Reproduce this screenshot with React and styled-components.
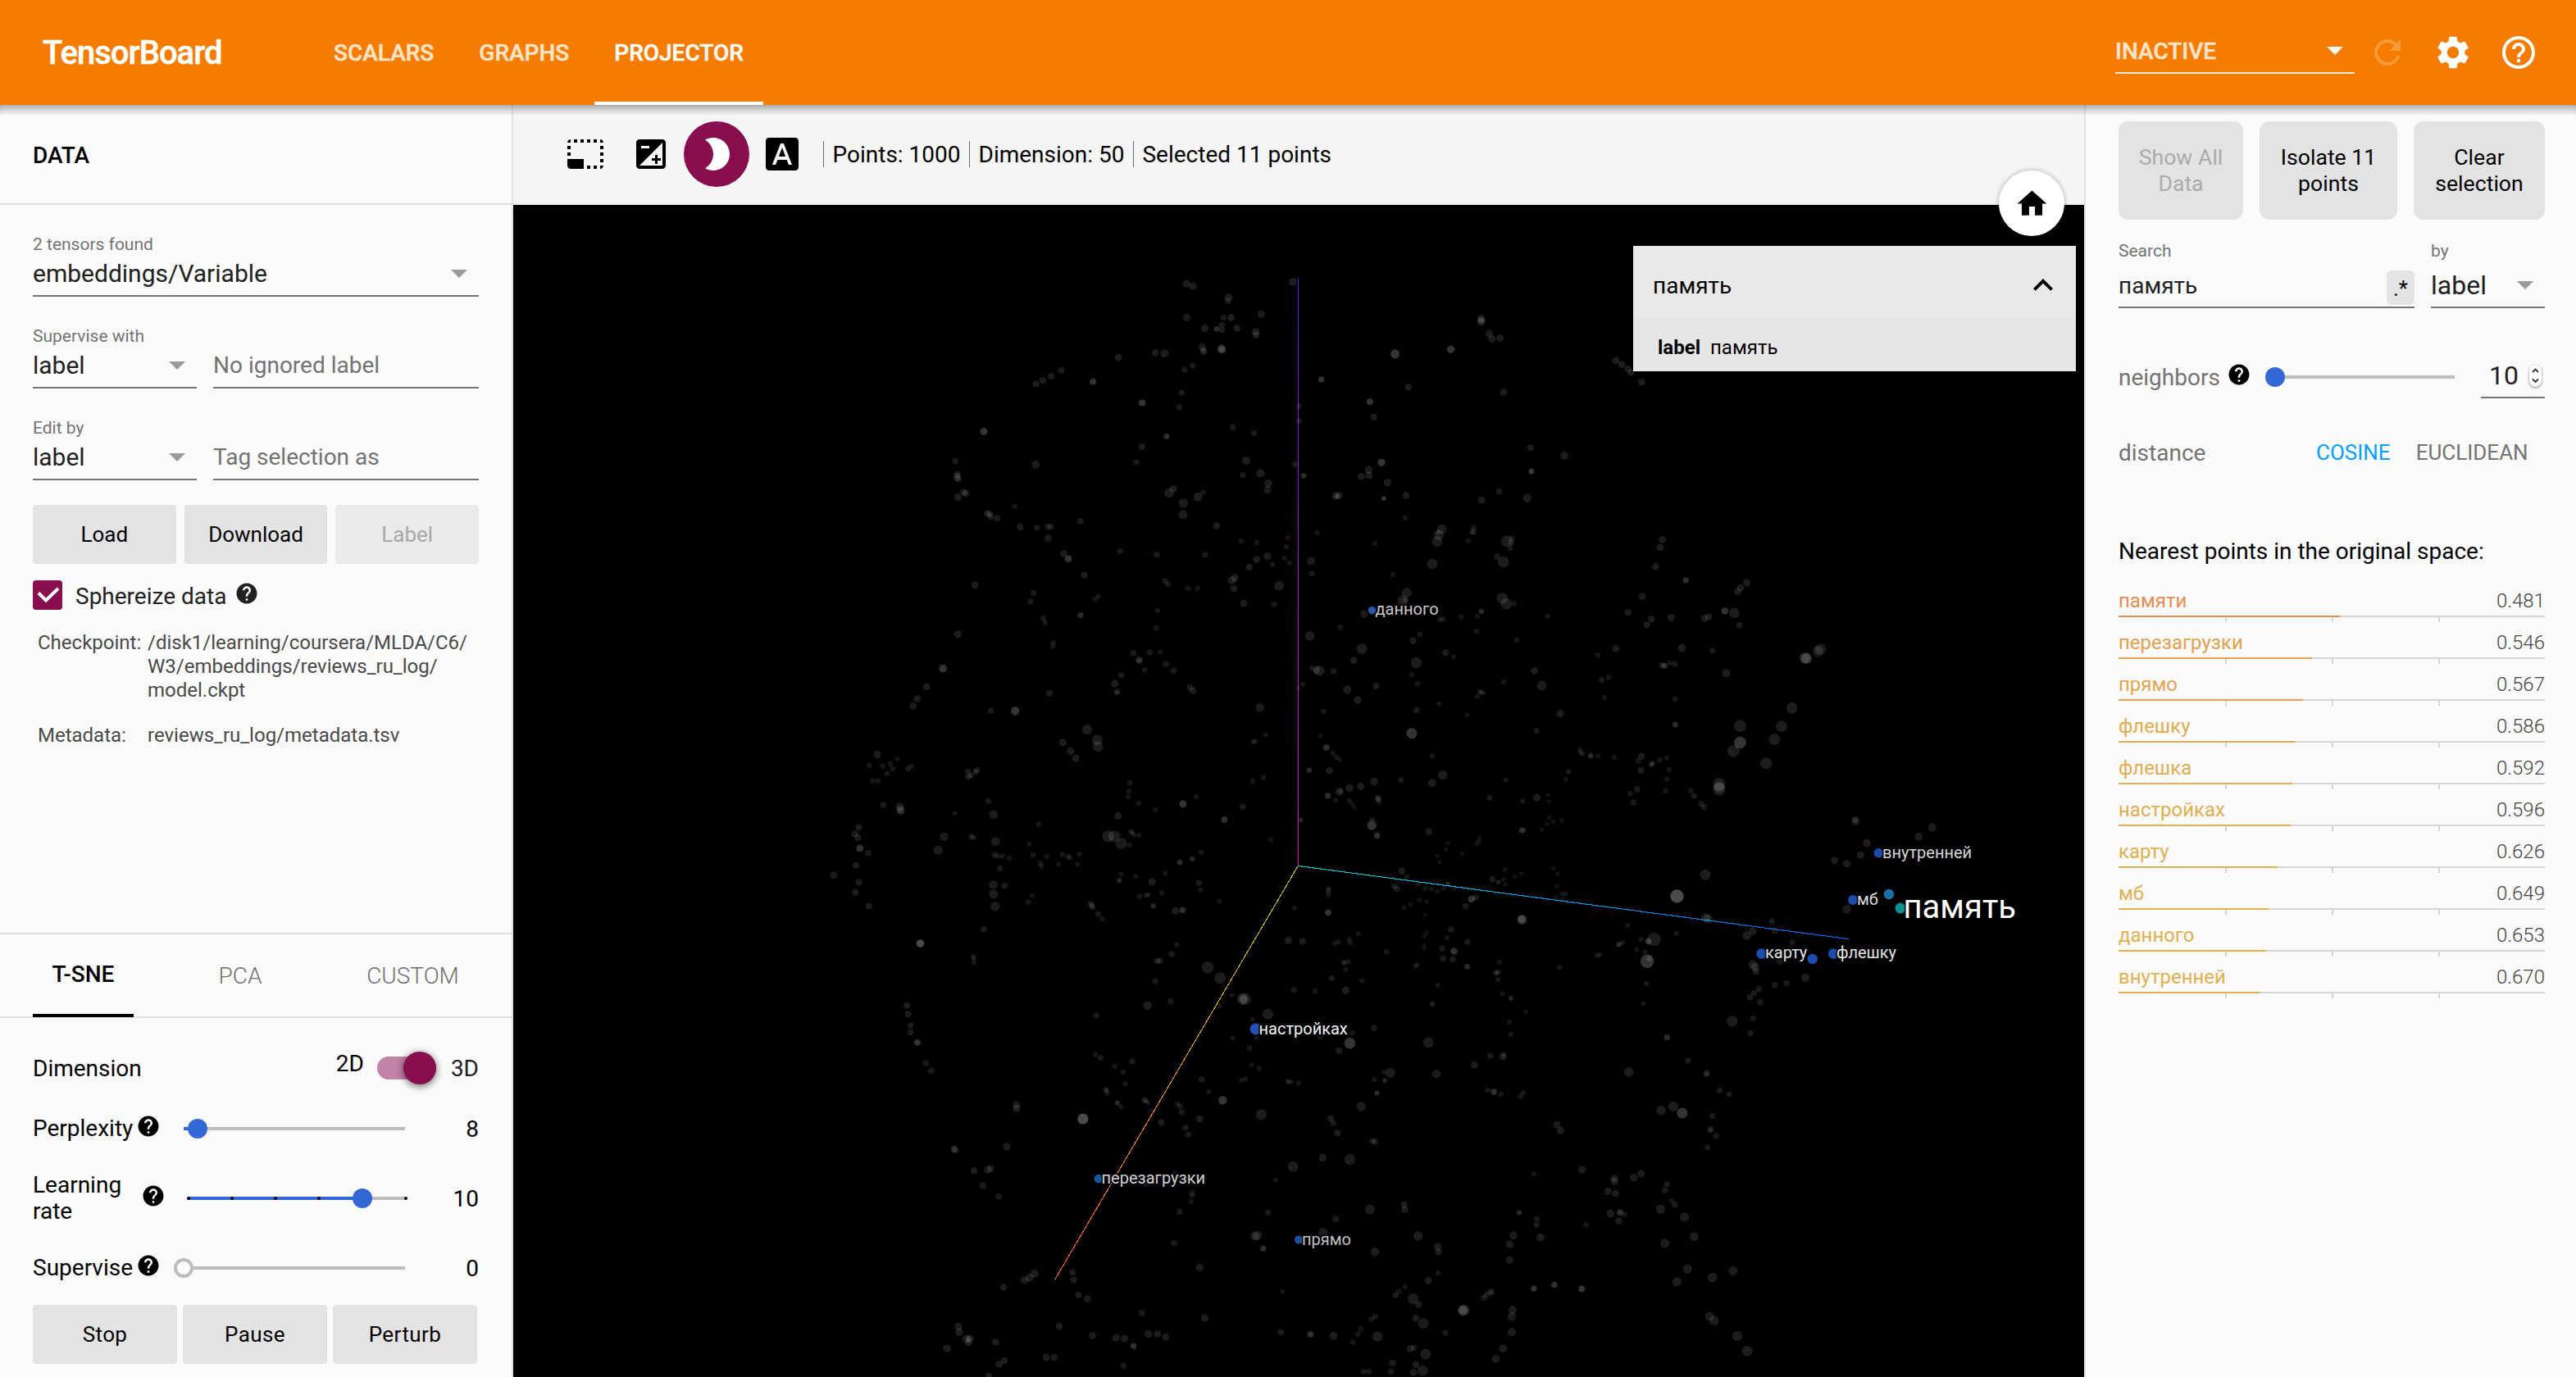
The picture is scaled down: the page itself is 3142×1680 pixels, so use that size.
import React from "react";
import styled, { createGlobalStyle, css } from "styled-components";
import {
  MdPhotoSizeSelectSmall,
  MdExposure,
  MdBrightness2,
  MdFontDownload,
  MdHome,
  MdSettings,
  MdHelp,
  MdHelpOutline,
  MdRefresh,
  MdExpandLess,
} from "react-icons/md";

const color = {
  orange: "#f57c00",
  accent: "#880e4f",
  blue: "#3367d6",
  panel: "#fafafa",
  line: "#e0e0e0",
  button: "#e3e3e3",
  text: "#212121",
  muted: "#737373",
};

const GlobalStyle = createGlobalStyle`
  * { box-sizing: border-box; }
  body {
    margin: 0;
    font-family: Roboto, "Noto Sans", sans-serif;
    font-size: 28px;
    color: #000;
    background: ${color.panel};
  }
  svg { display: block; flex: none; }
`;

const App = styled.div`
  display: flex;
  flex-direction: column;
  width: 3142px;
  height: 1680px;
  overflow: hidden;
`;

/* ---------- header ---------- */

const Header = styled.header`
  flex: none;
  display: flex;
  align-items: center;
  height: 128px;
  padding: 0 46px 0 52px;
  background: ${color.orange};
  color: #fff;
  -webkit-text-stroke: 0.5px currentColor;
  svg { -webkit-text-stroke: 0; }
`;

const Brand = styled.div`
  width: 331px;
  font-size: 40px;
  font-weight: 500;
  letter-spacing: -1px;
`;

const Nav = styled.nav`
  display: flex;
  gap: 7px;
`;

const NavTab = styled.div`
  display: flex;
  align-items: center;
  height: 128px;
  padding: 0 24px;
  border-top: 4px solid transparent;
  border-bottom: 4px solid ${(p) => (p.$active ? "#fff" : "transparent")};
  font-weight: 500;
  color: ${(p) => (p.$active ? "#fff" : "#fde3c8")};
`;

const Status = styled.div`
  display: flex;
  align-items: center;
  justify-content: space-between;
  width: 292px;
  height: 52px;
  margin: 0 16px 0 auto;
  padding: 0 14px 2px 0;
  border-bottom: 2px solid #fdebd8;
  font-weight: 500;
  color: #fde3c8;
`;

const HeaderIcon = styled.div`
  margin-right: ${(p) => (p.$last ? 0 : "32px")};
  opacity: ${(p) => (p.$dim ? 0.22 : 1)};
`;

const Caret = styled.span`
  border: 10px solid transparent;
  border-top-color: ${(p) => p.$color || "#9a9a9a"};
  border-bottom: 0;
`;

/* ---------- body ---------- */

const Body = styled.div`
  position: relative;
  flex: 1;
  display: flex;
  min-height: 0;
`;

const TopShade = styled.div`
  position: absolute;
  inset: 0 0 auto 0;
  height: 12px;
  box-shadow: inset 0 10px 12px -6px rgba(0, 0, 0, 0.4);
`;

const LeftPanel = styled.aside`
  flex: none;
  display: flex;
  flex-direction: column;
  width: 626px;
  background: ${color.panel};
  border-right: 2px solid ${color.line};
`;

const PanelTitle = styled.div`
  height: 122px;
  padding: 2px 40px 0;
  border-bottom: 2px solid ${color.line};
  line-height: 120px;
  font-weight: 500;
`;

const DataSection = styled.section`
  flex: 1;
  padding: 34px 40px 0;
`;

const FieldRow = styled.div`
  display: flex;
  align-items: flex-end;
  gap: 20px;
  margin-bottom: ${(p) => (p.$last ? 30 : 34)}px;
`;

const Field = styled.label`
  display: flex;
  flex-direction: column;
  flex: ${(p) => (p.$width ? `0 0 ${p.$width}px` : "1")};
`;

const FieldLabel = styled.span`
  height: 28px;
  line-height: 28px;
  font-size: 21px;
  color: ${color.muted};
`;

const FieldValue = styled.span`
  display: flex;
  align-items: center;
  justify-content: space-between;
  height: 50px;
  padding: 0 ${(p) => p.$pad ?? 14}px 5px 0;
  border-bottom: 2px solid ${color.muted};
  font-size: 30px;
  color: ${color.text};
  ${(p) =>
    p.$placeholder &&
    css`
      font-size: 28px;
      color: ${color.muted};
    `}
`;

const ButtonRow = styled.div`
  display: flex;
  gap: ${(p) => p.$gap}px;
`;

const Button = styled.button`
  flex: 1;
  height: 72px;
  padding: 0;
  border: 0;
  border-radius: 4px;
  background: ${color.button};
  font: 26px Roboto, sans-serif;
  letter-spacing: ${(p) => p.$spacing || 0}px;
  color: #000;
  &:disabled {
    background: #eaeaea;
    color: #a8a8a8;
  }
`;

const CheckRow = styled.div`
  display: flex;
  align-items: center;
  height: 36px;
  margin: 20px 0 26px;
  color: ${color.text};
`;

const Checkbox = styled.span`
  width: 36px;
  height: 36px;
  margin-right: 16px;
  border-radius: 4px;
  background: ${color.accent};
`;

const CheckLabel = styled.span`
  margin-right: 10px;
  padding-top: 2px;
`;

const Meta = styled.dl`
  display: grid;
  grid-template-columns: 134px 420px;
  row-gap: 26px;
  margin: 0 0 0 6px;
  font-size: 24px;
  line-height: 29px;
  color: #4a4a4a;
  dd { margin: 0; }
`;

const Projection = styled.section`
  flex: none;
  border-top: 2px solid ${color.line};
`;

const Tabs = styled.div`
  display: flex;
  height: 102px;
  padding-left: 40px;
  border-bottom: 2px solid ${color.line};
`;

const Tab = styled.div`
  width: ${(p) => p.$width}px;
  height: 101px;
  padding-top: ${(p) => (p.$active ? 0 : 2)}px;
  line-height: 97px;
  text-align: center;
  font-weight: ${(p) => (p.$active ? 500 : 300)};
  color: ${(p) => (p.$active ? "#000" : "#707070")};
  border-bottom: 4px solid ${(p) => (p.$active ? "#000" : "transparent")};
`;

const Controls = styled.div`
  padding: 41px 42px 16px 40px;
`;

const Control = styled.div`
  display: flex;
  align-items: center;
  height: ${(p) => p.$height}px;
  margin-bottom: ${(p) => p.$after}px;
`;

const ControlLabel = styled.span`
  width: ${(p) => p.$width}px;
  margin-right: 4px;
  line-height: 32px;
`;

const Help = styled.span`
  margin-right: ${(p) => p.$after || 0}px;
  padding-bottom: ${(p) => p.$lift ?? 6}px;
`;

const ControlValue = styled.span`
  flex: 1;
  margin-right: -2px;
  text-align: right;
`;

const TwoD = styled.span`
  margin: -12px 16px 0 auto;
`;

const Toggle = styled.span`
  display: flex;
  justify-content: flex-end;
  align-items: center;
  width: 72px;
  height: 28px;
  margin-right: 18px;
  border-radius: 14px;
  background: #c283a6;
`;

const ToggleKnob = styled.span`
  width: 40px;
  height: 40px;
  border-radius: 50%;
  background: ${color.accent};
  box-shadow: 0 2px 10px rgba(0, 0, 0, 0.6);
`;

const ThreeD = styled.span`
  margin-right: -2px;
  color: ${color.text};
`;

/* ---------- slider ---------- */

const Track = styled.span`
  position: relative;
  flex: none;
  width: ${(p) => p.$width}px;
  height: 4px;
  background: #bdbdbd;
`;

const Fill = styled.span`
  display: block;
  height: 4px;
  background: ${color.blue};
`;

const Knob = styled.span`
  position: absolute;
  top: -10px;
  width: 24px;
  height: 24px;
  margin-left: -12px;
  border-radius: 50%;
  background: ${(p) => (p.$empty ? color.panel : color.blue)};
  border: ${(p) => (p.$empty ? "4px solid #bdbdbd" : "0")};
`;

const Mark = styled.span`
  position: absolute;
  top: 0;
  width: 4px;
  height: 4px;
  margin-left: -2px;
  border-radius: 50%;
  background: #000;
`;

function Slider({ width, value, marks = 0, empty }) {
  const steps = Array.from({ length: marks }, (_, i) => (i * 100) / (marks - 1));
  return (
    <Track $width={width}>
      <Fill style={{ width: `${value}%` }} />
      {steps.map((s) => (
        <Mark key={s} style={{ left: `${s}%` }} />
      ))}
      <Knob $empty={empty} style={{ left: `${value}%` }} />
    </Track>
  );
}

/* ---------- centre ---------- */

const Center = styled.main`
  position: relative;
  flex: none;
  width: 1916px;
`;

const Toolbar = styled.div`
  display: flex;
  align-items: center;
  height: 122px;
  padding-left: 48px;
  background: #f5f5f5;
  border-bottom: 2px solid #eee;
`;

const ToolButton = styled.span`
  display: flex;
  align-items: center;
  justify-content: center;
  width: 80px;
  height: 80px;
  border-radius: 50%;
  background: ${(p) => (p.$on ? color.accent : "transparent")};
  color: ${(p) => (p.$on ? "#fff" : "#000")};
`;

const Stats = styled.div`
  display: flex;
  margin-left: 10px;
`;

const Stat = styled.span`
  height: 32px;
  padding: 0 10.5px 0 10.5px;
  border-left: 1.5px solid #6a6a6a;
  line-height: 33px;
  white-space: nowrap;
`;

const HomeButton = styled.div`
  position: absolute;
  top: 80px;
  right: 24px;
  display: flex;
  align-items: center;
  justify-content: center;
  width: 80px;
  height: 80px;
  border-radius: 50%;
  background: #fff;
  box-shadow: 0 0 6px rgba(0, 0, 0, 0.3);
`;

const Card = styled.div`
  position: absolute;
  top: 172px;
  right: 10px;
  width: 540px;
`;

const CardHead = styled.div`
  display: flex;
  align-items: center;
  justify-content: space-between;
  height: 88px;
  padding: 8px 16px 0 24px;
  background: #e9e9e9;
`;

const CardRow = styled.div`
  display: flex;
  gap: 12px;
  height: 65px;
  padding: 4px 30px 0;
  background: #e6e6e6;
  line-height: 65px;
  font-size: 24px;
`;

/* Point cloud: every sector holds "x y diameter" triples on its own grid. */
const SECTORS = [
  {
    x: 1000, y: 300, sx: 1.96, sy: 2.24,
    points: `877 104 18,892 110 18,1131 98 19,977 141 19,976 151 14,877 196 18,965 196 14,983 196 18,1055 187 18,961 216 14,962 230 14,949 227 14,949 227 12,920 225 18,997 225 17,1042 235 18,1043 244 16,914 276 17,918 288 17,917 286 13,960 282 22,961 282 18,961 283 15,802 292 17,824 294 19,714 305 17,577 340 16,553 356 16,533 368 16,517 377 16,653 371 16,653 371 14,891 327 14,872 338 14,865 401 14,859 441 14,770 428 16,771 430 16,392 507 18,392 507 17,987 496 15,1038 512 14,1145 438 14,1145 479 14,829 520 15,829 521 13,770 549 16,756 591 14,324 588 15,516 598 19,329 625 16,328 632 18,331 638 15,344 673 16,349 677 17,330 687 18,835 675 23,845 664 18,869 703 22,868 734 22,904 686 22,916 673 13,948 765 17,1019 587 20,1011 626 14,1053 622 20,1072 649 19,1070 667 18,1136 597 15,1156 628 14,1157 629 12,1233 683 18,1241 682 17,1237 685 13,1199 365 15,1198 365 14,1315 426 16,1315 426 15,1324 468 16,1375 295 22,1375 296 21,1509 283 18,1407 386 16,1343 592 19,1342 592 17,1312 612 18,1313 627 18,1294 630 17,1357 647 18,1401 682 17,1348 690 12,1348 690 11,1348 690 10,1399 743 13,1487 774 23,1480 790 24,1476 808 25,1477 783 12,466 712 13,400 731 16,406 733 16,409 741 15,424 744 15,479 768 17,519 770 14,545 768 14,552 767 14,546 799 17,623 752 15,583 841 17,594 855 18,594 855 15,632 900 17,718 834 14,805 844 15,921 844 15,1007 807 13,1045 811 13,1119 797 12,1115 822 13,1111 853 12,1123 867 12,1082 871 12,1070 848 18,1044 857 18,1026 878 16,1189 784 13,1174 861 19,1176 895 14,1327 813 12,1370 899 13,1464 869 25,371 927 18,511 948 14,503 972 14,666 957 12,658 965 13,825 915 14,832 924 14,880 936 13,903 936 13,992 907 18,985 914 19,990 937 16,1098 929 23,1013 977 17,1086 979 14,1403 948 24,1393 969 24,1400 968 14,1301 1006 18,534 1018 14,539 1030 13,622 1010 14,625 1008 12,807 996 13,804 1044 13,558 1084 13,557 1094 13,330 1061 18,1171 1066 23,1244 1043 13,1296 1101 25,1434 1062 13,1418 1079 16,1426 1139 26,1276 1133 16,1482 1021 13,1489 1020 13,1496 1112 16,1515 1123 12,750 1113 15,789 1111 14,814 1110 13,763 1131 17,764 1134 14,776 1159 13,827 1143 15,846 1161 15,721 1174 15,705 1196 18,711 1218 14,709 1222 12,885 1207 15,892 1216 16,294 1154 20,295 1156 17,255 1205 17,233 1238 17,223 1257 17,549 1223 16,409 1270 15,467 1270 20,467 1272 21,1052 1262 20,1194 1161 25,1187 1159 18,1176 1154 12,1228 1162 14,1261 1212 20,1286 1241 18,1330 1203 16,1154 1198 12,1143 1209 12,1204 1272 13,1415 1172 12,1429 1197 13,1426 1269 15,1480 1251 12,1415 1332 26,1415 1332 25,639 1322 24,663 1350 25,665 1368 25,581 1357 18,599 1381 18,612 1400 18,1066 1336 12,1041 1354 12,1036 1355 12,1196 1339 11,1211 1371 16,1211 1371 13,1226 1386 12,1235 1397 12,1242 1404 12,1170 1433 14,1170 1433 11,1218 1434 17,1464 1394 13,1489 1446 22,1464 1468 20,1389 1460 14,137 1390 18,118 1420 13,150 1422 13,169 1415 13,185 1402 12,174 1430 13,161 1442 13,211 1428 14,220 1422 12,125 1462 13,138 1462 13,376 1432 14,372 1438 14,354 1437 14,361 1447 14,355 1451 15,741 1467 13,739 1490 13,737 1506 12,762 1524 13,802 1541 12,868 1525 19,868 1525 15,900 1506 12,1060 1453 13,1034 1462 13,1011 1533 15,1325 1464 19,1293 1477 18,1266 1482 19,1242 1492 19,1245 1490 12,1214 1502 15,1215 1504 13,1233 1515 12,1266 1516 12,1273 1526 11,1278 1536 11,1334 1508 14,1335 1512 14,1336 1519 13,152 1528 15,191 1533 20,193 1541 19,193 1546 17,323 1551 12,403 1517 14,415 1554 21,713 1558 18,967 1566 14,1150 1568 11,1321 1568 12`,
  },
  {
    x: 1000, y: 1000, sx: 1.96, sy: 2.306,
    points: `523 13 13,93 22 16,84 40 16,91 51 16,95 80 18,96 81 15,116 94 15,86 129 16,33 156 17,93 176 16,85 205 17,117 243 16,297 48 20,283 86 22,362 48 14,368 51 12,420 61 21,501 69 12,418 99 14,426 103 13,437 103 13,453 108 13,430 137 14,510 99 13,527 122 13,530 131 12,542 104 13,571 126 12,580 98 13,593 104 12,598 107 12,621 97 12,616 125 12,415 183 21,415 209 21,419 244 22,442 186 15,507 214 12,498 232 12,392 308 15,240 348 21,240 349 18,240 348 17,367 385 13,368 391 12,368 402 12,689 47 28,704 47 28,721 67 27,743 34 12,747 37 12,751 43 12,763 44 12,740 72 12,911 92 13,861 119 14,860 121 12,892 110 12,889 111 12,826 151 12,720 154 12,717 170 12,715 172 12,755 160 12,794 175 18,764 216 13,785 211 12,780 213 12,817 206 12,797 241 12,797 244 12,906 178 14,910 198 12,955 230 12,647 237 14,651 242 14,652 247 13,665 266 14,675 279 13,850 257 18,867 254 15,867 255 14,1078 57 12,1134 249 12,1098 230 12,1217 194 13,1216 200 13,1216 210 13,1215 261 16,1215 262 14,1120 340 17,1154 343 16,1230 348 12,1240 344 12,1265 337 12,1268 347 12,1287 321 12,1355 372 13,1253 402 12,1253 403 11,1263 400 12,1257 422 12,853 352 13,841 379 15,806 398 15,813 397 15,802 455 15,783 523 21,838 511 14,661 551 14,927 416 28,957 446 27,985 494 12,956 524 12,1010 505 27,1016 505 28,1013 505 18,1071 547 26,1034 562 12,1133 479 14,1184 482 13,1224 446 14,1257 480 18,1296 453 13,1267 629 28,1267 629 25,1241 650 16,1274 600 12,1325 586 15,1195 613 12,1090 583 12,987 614 12,1027 643 13,1044 614 12,1032 690 12,1050 700 12,1018 730 12,1008 733 12,913 731 15,930 765 12,1118 737 12,1121 737 11,1128 738 11,1144 741 12,963 789 21,963 790 20,208 523 16,211 547 16,217 579 14,217 598 15,233 626 17,233 628 14,253 685 15,266 707 15,659 660 13,671 670 14,705 694 13,747 680 14,725 710 13,730 743 13,684 759 13,685 762 12,687 771 12,711 797 12,711 798 12,720 808 12,776 789 14,779 791 12,784 796 12,816 852 16,855 799 12,861 806 14,865 823 15,874 867 15,881 886 15,908 842 17,629 842 27,629 842 26,629 842 24,470 802 18,470 813 18,447 920 18,321 926 16,323 930 16,409 981 16,402 985 18,368 988 16,390 1030 16,427 1060 15,1055 830 26,1364 712 23,1349 711 12,1351 733 12,1350 735 11,1326 732 12,1332 769 12,1332 770 12,1294 807 22,1221 840 16,1227 854 15,1237 882 17,1202 951 18,1267 956 26,1321 904 14,1327 906 15,1131 976 25,1474 716 20,1455 627 25,1090 1014 12,1071 1105 14,849 995 13,777 1026 13,890 1049 13,890 1058 13,888 1075 12,860 1103 15,847 1192 15,1040 1172 21,1046 1170 22,1060 1206 15,1060 1207 13,1203 1162 22,1233 1123 16,1315 1096 23,1397 1083 16,1398 1097 16,1430 1171 22,1327 1216 21,1477 1202 18,1479 1216 16,1478 1276 13,1455 1297 17,1399 1314 12,1384 1328 13,1376 1338 14,1106 1327 12,908 1260 18,920 1402 18,770 1388 15,513 1277 20,501 1289 20,489 1296 18,439 1315 17,604 1274 16,607 1295 16,618 1337 16,640 1348 17,572 1425 17,331 1426 18,333 1442 18,351 1461 20,359 1461 19,355 1472 17,355 1461 13,304 1488 19,420 1470 17,541 1513 18,560 1513 17,441 1522 17,429 1532 17,404 1566 17,652 1452 17,708 1458 18,728 1460 18,750 1480 14,750 1482 14,785 1447 18,807 1447 17,827 1456 17,726 1536 15,1102 1442 15,1173 1448 17,1173 1448 13,1228 1452 19,1274 1470 13,1286 1448 13,1293 1433 13,1318 1406 13,1327 1398 14,1333 1454 24,1418 1348 26,1431 1364 16,1425 1403 16,1443 1417 25,1495 1444 14,1411 1488 17,1420 1486 14,1448 1504 25,1369 1529 16,1425 1533 17,1441 1550 25,1419 1555 17,1300 1553 14,1313 1553 14,1365 1553 15,1320 14 24,1319 18 21,1332 43 15,1332 47 14,1456 34 17,1502 66 10,1498 84 10,1476 102 10,1482 119 10,1391 145 17,1403 161 12,1373 188 14,1380 195 15,1430 181 12,1447 194 12,1462 195 12,1476 202 11,1500 180 12,1502 182 11,1490 194 11,1517 192 11,1433 226 11,1412 238 11,1397 247 11,1451 231 10,1447 268 10,1451 317 10,1446 328 10,1445 353 10,1444 364 10,1509 309 15,1499 332 12,1488 363 15,1516 370 18,1516 370 14,1490 391 15,1513 393 15,1428 408 12,1423 413 11,1477 466 12,1464 517 12,1465 521 11,967 2 16,1150 2 11`,
  },
  {
    x: 1750, y: 300, sx: 1.96, sy: 2.24,
    points: `111 198 19,111 208 19,111 204 17,130 240 18,137 254 18,156 252 18,38 283 18,433 313 17,447 324 17,462 336 17,469 346 16,495 372 17,165 400 17,229 551 16,310 573 19,231 616 14,231 616 13,231 616 11,154 671 15,112 695 17,221 689 20,93 770 13,93 781 14,89 783 13,80 806 12,172 807 27,184 799 14,183 811 15,180 826 13,149 849 15,164 864 27,161 963 27,171 978 27,189 978 13,112 998 13,111 1000 12,102 1012 12,63 1014 12,100 1053 13,270 1012 13,196 1078 13,544 803 18,539 824 17,528 876 17,600 914 15,600 914 13,746 921 17,731 934 17,724 945 17,496 958 17,462 1002 16,518 1020 16,507 1035 16,565 1016 17,645 1018 16,655 1014 16,694 998 16,693 998 16,716 1003 25,728 1036 15,390 1119 13,433 1100 17,591 1099 19,664 1106 14,543 1146 14,549 1148 15,551 1147 13,562 1140 13,574 1143 14,697 1168 20,399 1186 14,416 1179 13,406 1234 13,238 1161 17,256 1202 23,165 1192 12,108 1217 12,110 1221 12,116 1222 12,102 1231 12,77 1281 11,300 1278 18,243 1325 14,575 1239 13,575 1308 14,575 1309 12,884 1126 26,888 1127 27,889 1128 24,922 1102 26,916 1108 25,854 1263 27,829 1313 27,812 1349 27,792 1414 28,730 1312 29,730 1357 29,730 1358 28,714 1381 29,680 1471 30,680 1485 30,680 1479 26,347 1376 12,348 1385 12,354 1388 12,373 1393 14,373 1394 11,390 1394 12,429 1398 13,494 1395 17,486 1407 13,520 1414 13,520 1415 12,517 1420 11,538 1405 13,555 1399 12,493 1433 16,560 1431 13,555 1457 13,552 1490 13,484 1485 15,467 1497 13,475 1521 15,612 1489 13,620 1503 14,637 1525 14,644 1534 14,320 1436 11,320 1437 10,313 1458 11,170 1460 12,131 1508 14,244 1508 18,210 1517 12,271 1500 10,273 1518 10,274 1562 11,1005 1567 16`,
  },
  {
    x: 1750, y: 1000, sx: 1.96, sy: 2.306,
    points: `1006 6 18,1189 22 20,1157 48 19,1033 66 19,1018 100 18,956 115 17,985 124 18,985 252 21,268 12 11,283 6 11,304 2 11,256 29 10,207 31 13,209 30 14,215 29 10,107 51 10,106 62 11,100 68 11,66 95 10,167 141 11,207 151 10,191 160 10,138 168 15,153 174 11,151 177 10,164 168 11,169 182 10,283 137 11,293 152 10,292 188 11,312 209 13,303 209 11,290 218 11,306 225 11,314 232 10,98 219 15,88 223 17,87 224 15,74 243 15,209 281 24,208 281 21,208 280 16,78 344 14,77 413 14,79 414 12,155 401 12,153 429 12,147 430 13,147 431 12,151 450 12,162 490 12,182 501 12,182 505 11,298 416 12,218 541 11,178 570 12,182 604 12,165 661 13,163 667 17,133 664 14,95 690 18,127 761 13,141 766 15,142 766 14,158 773 13,211 769 13,205 779 13,579 215 32,579 215 31,579 216 33,647 155 25,648 276 22,654 279 21,578 320 13,524 337 32,510 342 15,511 343 15,493 337 12,508 398 33,508 399 32,513 391 14,483 366 12,502 373 12,461 297 12,449 346 12,441 351 13,439 352 12,395 380 12,388 383 12,506 461 13,499 517 12,806 286 15,813 313 15,760 314 19,746 326 21,855 345 14,760 408 20,766 415 20,768 427 16,825 399 15,886 445 20,841 460 15,813 465 14,775 477 15,763 488 14,754 500 15,778 514 15,761 559 14,755 601 14,711 567 26,555 613 15,556 613 13,605 678 14,464 710 23,650 713 15,650 717 13,681 762 14,704 773 14,664 834 14,660 870 14,658 875 13,673 890 14,652 922 14,541 818 23,570 807 24,591 825 26,592 826 25,292 858 18,301 875 18,352 985 18,237 997 12,429 1009 17,430 1018 18,414 1046 18,432 1052 17,476 1007 18,493 996 18,555 1026 14,550 1043 15,567 1073 13,574 1083 14,540 1096 22,597 1118 22,620 1173 21,550 1192 22,420 1108 19,443 1105 15,443 1106 14,454 1111 13,440 1129 17,202 1105 12,202 1106 12,244 1123 14,243 1140 14,362 1140 13,253 1175 19,188 1170 19,179 1195 18,179 1239 18,604 1264 22,579 1300 22,664 1288 23,713 1269 22,286 1308 15,286 1309 14,237 1318 15,237 1321 14,351 1320 16,352 1321 15,134 1327 14,135 1332 13,124 1336 14,118 1346 14,67 1381 26,70 1380 27,68 1380 20,186 1380 20,184 1399 20,184 1442 20,163 1488 19,146 1517 19,657 1397 22,668 1409 23,723 1453 24,747 1495 25`,
  },
];

const CLOUD = SECTORS.flatMap((s) =>
  s.points.split(",").map((t) => {
    const [x, y, d] = t.trim().split(" ").map(Number);
    return {
      x: s.x + x / s.sx,
      y: s.y + y / s.sy,
      r: d / s.sx / 2,
      o: d < 12 ? 0.075 : d < 14 ? 0.088 : d < 16 ? 0.1 : 0.11,
    };
  })
);

const SELECTED = [
  [1673.5, 744.6, 4.7, "#2a57ab"],
  [1531.6, 1255.4, 7, "#2450b8"],
  [1339.8, 1438, 5.3, "#1a559f"],
  [1584, 1512.6, 5, "#1a509f"],
  [2291.3, 1040.8, 5.7, "#1e4ba8"],
  [2260, 1098, 6, "#1e4ba8"],
  [2304, 1091, 6.2, "#1a6fa5"],
  [2317.9, 1108, 6.4, "#0a9090"],
  [2148.5, 1163.5, 6.3, "#1e4bb0"],
  [2210.7, 1170, 6.2, "#1e4bb0"],
  [2236.2, 1163.5, 6.3, "#1e4bb0"],
];

const LABELS = [
  [1677.5, 749.5, "данного", "#c6c6c6"],
  [1535.5, 1262, "настройках", "#f4f4f4"],
  [1343.5, 1443.5, "перезагрузки", "#d0d0d0"],
  [1588, 1519, "прямо", "#c0c0c0"],
  [2296, 1046.5, "внутренней", "#d4d4d4"],
  [2265, 1104, "мб", "#dcdcdc"],
  [2153, 1168.5, "карту", "#e4e4e4"],
  [2240, 1168.5, "флешку", "#e4e4e4"],
];

const Scene = styled.svg`
  width: 1916px;
  height: 1430px;
  background: #000;
`;

const PointLabel = styled.text`
  font: ${(p) => p.$size || 20}px Roboto, sans-serif;
  stroke: #000;
  stroke-width: 3px;
  paint-order: stroke;
`;

function Gradient({ id, line, from, to }) {
  const [x1, y1, x2, y2] = line;
  return (
    <linearGradient id={id} gradientUnits="userSpaceOnUse" x1={x1} y1={y1} x2={x2} y2={y2}>
      <stop offset="0" stopColor={from} />
      <stop offset="1" stopColor={to} />
    </linearGradient>
  );
}

const AXES = [
  { id: "axis-y", line: [1583.5, 1056, 1583.51, 340], from: "#dd10b8", to: "#5a18d8" },
  { id: "axis-x", line: [1584, 1056.5, 2255, 1145.7], from: "#00d2d8", to: "#0064ff" },
  { id: "axis-z", line: [1583.5, 1056, 1286.7, 1561], from: "#c8c81e", to: "#ff6410" },
];

function Projector() {
  return (
    <Scene viewBox="626 250 1916 1430">
      <defs>
        {AXES.map((a) => (
          <Gradient key={a.id} {...a} />
        ))}
      </defs>
      {AXES.map(({ id, line: [x1, y1, x2, y2] }) => (
        <line key={id} x1={x1} y1={y1} x2={x2} y2={y2} stroke={`url(#${id})`} strokeWidth="1.1" shapeRendering="crispEdges" />
      ))}
      {CLOUD.map((p, i) => (
        <circle key={i} cx={p.x} cy={p.y} r={p.r} fill="#fff" fillOpacity={p.o} />
      ))}
      {SELECTED.map(([x, y, r, fill], i) => (
        <circle key={i} cx={x} cy={y} r={r} fill={fill} />
      ))}
      {LABELS.map(([x, y, text, fill]) => (
        <PointLabel key={text} x={x} y={y} fill={fill}>
          {text}
        </PointLabel>
      ))}
      <PointLabel x="2321.5" y="1120" fill="#fff" $size={40}>
        память
      </PointLabel>
    </Scene>
  );
}

/* ---------- right panel ---------- */

const RightPanel = styled.aside`
  flex: 1;
  min-width: 0;
  padding: 20px 38px 0 40px;
  border-left: 2px solid ${color.line};
  background: ${color.panel};
`;

const Actions = styled.div`
  display: grid;
  grid-template-columns: 152px 168px 160px;
  gap: 20px;
  margin-bottom: 24px;
`;

const Action = styled.button`
  height: 120px;
  padding: 0 20px;
  border: 0;
  border-radius: 12px;
  background: ${color.button};
  font: 26.67px/32px Roboto, sans-serif;
  color: #000;
  &:disabled { color: #ababab; }
`;

const SearchRow = styled.div`
  display: flex;
  gap: 20px;
`;

const SearchValue = styled.span`
  display: flex;
  align-items: center;
  justify-content: space-between;
  height: 56px;
  padding: 2px ${(p) => p.$pad || 0}px 0 0;
  border-bottom: 2px solid ${color.muted};
  font-size: ${(p) => p.$size}px;
  color: ${color.text};
`;

const RegexButton = styled.span`
  width: 34px;
  height: 42px;
  margin-top: 6px;
  border-radius: 6px;
  background: ${color.button};
  text-align: center;
  font-size: 26px;
  line-height: 44px;
  color: #000;
`;

const Neighbors = styled.div`
  display: flex;
  align-items: center;
  height: 50px;
  margin-top: 60px;
  padding-bottom: 2px;
`;

const Caption = styled.span`
  flex: none;
  width: ${(p) => p.$width}px;
  color: ${color.muted};
`;

const NumberBox = styled.span`
  display: flex;
  align-items: center;
  justify-content: flex-end;
  gap: 13px;
  width: 78px;
  height: 50px;
  margin: 2px 0 0 auto;
  padding: 0 4px 4px 0;
  border-bottom: 2px solid ${color.muted};
  font-size: 32px;
  color: ${color.text};
`;

const Spinner = styled.span`
  padding: 4px 0;
  border-radius: 7.5px;
  background: #fff;
  box-shadow: 0 1px 3px rgba(0, 0, 0, 0.5);
`;

const DistanceRow = styled.div`
  display: flex;
  align-items: center;
  height: 40px;
  margin-top: 46px;
`;

const Metric = styled.span`
  margin-right: ${(p) => (p.$active ? 31 : 0)}px;
  font-size: 26px;
  color: ${(p) => (p.$active ? "#03a0ff" : color.muted)};
`;

const NearestTitle = styled.div`
  height: 40px;
  margin: 81px 0 9px;
  line-height: 40px;
`;

const Neighbor = styled.div`
  height: 51px;
  padding-top: 16px;
`;

const NeighborText = styled.div`
  display: flex;
  justify-content: space-between;
  height: 33px;
  line-height: 30px;
  font-size: 24px;
  color: ${(p) => p.$color};
`;

const Distance = styled.span`
  font-weight: 300;
  color: #444;
`;

const Bar = styled.div`
  position: relative;
  height: 2px;
  background: #d6d6d6;
`;

const BarFill = styled.div`
  position: relative;
  height: 2px;
  background: ${(p) => p.$color};
`;

const Tick = styled.span`
  position: absolute;
  top: 1px;
  width: 2px;
  height: 7px;
  background: #d6d6d6;
`;

const NEIGHBORS = [
  ["памяти", 0.481, "#e68c55"],
  ["перезагрузки", 0.546, "#e59f50"],
  ["прямо", 0.567, "#e3a550"],
  ["флешку", 0.586, "#e0ac50"],
  ["флешка", 0.592, "#e0ad50"],
  ["настройках", 0.596, "#e0ae50"],
  ["карту", 0.626, "#dfaf50"],
  ["мб", 0.649, "#dfb050"],
  ["данного", 0.653, "#dfb050"],
  ["внутренней", 0.67, "#dfb050"],
];

export default function TensorBoard() {
  return (
    <App>
      <GlobalStyle />
      <Header>
        <Brand>TensorBoard</Brand>
        <Nav>
          <NavTab>SCALARS</NavTab>
          <NavTab>GRAPHS</NavTab>
          <NavTab $active>PROJECTOR</NavTab>
        </Nav>
        <Status>
          INACTIVE
          <Caret $color="#fff" />
        </Status>
        <HeaderIcon $dim><MdRefresh size={48} /></HeaderIcon>
        <HeaderIcon><MdSettings size={48} /></HeaderIcon>
        <HeaderIcon $last><MdHelpOutline size={48} /></HeaderIcon>
      </Header>

      <Body>
        <LeftPanel>
          <PanelTitle>DATA</PanelTitle>
          <DataSection>
            <FieldRow>
              <Field>
                <FieldLabel>2 tensors found</FieldLabel>
                <FieldValue>embeddings/Variable<Caret /></FieldValue>
              </Field>
            </FieldRow>
            <FieldRow>
              <Field $width={200}>
                <FieldLabel>Supervise with</FieldLabel>
                <FieldValue>label<Caret /></FieldValue>
              </Field>
              <Field>
                <FieldValue $placeholder>No ignored label</FieldValue>
              </Field>
            </FieldRow>
            <FieldRow $last>
              <Field $width={200}>
                <FieldLabel>Edit by</FieldLabel>
                <FieldValue>label<Caret /></FieldValue>
              </Field>
              <Field>
                <FieldValue $placeholder>Tag selection as</FieldValue>
              </Field>
            </FieldRow>
            <ButtonRow $gap={10}>
              <Button>Load</Button>
              <Button>Download</Button>
              <Button disabled>Label</Button>
            </ButtonRow>
            <CheckRow>
              <Checkbox>
                <svg width="36" height="36" viewBox="0 0 36 36" fill="none" stroke="#fff" strokeWidth="4">
                  <path d="M7 15.5l9 9L31 10" />
                </svg>
              </Checkbox>
              <CheckLabel>Sphereize data</CheckLabel>
              <Help $lift={4}><MdHelp size={30} /></Help>
            </CheckRow>
            <Meta>
              <dt>Checkpoint:</dt>
              <dd>/disk1/learning/coursera/MLDA/C6/<br />W3/embeddings/reviews_ru_log/<br />model.ckpt</dd>
              <dt>Metadata:</dt>
              <dd>reviews_ru_log/metadata.tsv</dd>
            </Meta>
          </DataSection>

          <Projection>
            <Tabs>
              <Tab $active $width={123}>T-SNE</Tab>
              <Tab $width={260}>PCA</Tab>
              <Tab $width={161}>CUSTOM</Tab>
            </Tabs>
            <Controls>
              <Control $height={40} $after={24}>
                <span>Dimension</span>
                <TwoD>2D</TwoD>
                <Toggle><ToggleKnob /></Toggle>
                <ThreeD>3D</ThreeD>
              </Control>
              <Control $height={60} $after={23}>
                <ControlLabel $width={122}>Perplexity</ControlLabel>
                <Help $after={28}><MdHelp size={30} /></Help>
                <Slider width={270} value={6.3} />
                <ControlValue>8</ControlValue>
              </Control>
              <Control $height={64} $after={23}>
                <ControlLabel $width={128}>Learning rate</ControlLabel>
                <Help $after={28}><MdHelp size={30} /></Help>
                <Slider width={265} value={80} marks={6} />
                <ControlValue>10</ControlValue>
              </Control>
              <Control $height={60} $after={15}>
                <ControlLabel $width={122}>Supervise</ControlLabel>
                <Help $after={28}><MdHelp size={30} /></Help>
                <Slider width={270} value={0} empty />
                <ControlValue>0</ControlValue>
              </Control>
              <ButtonRow $gap={7}>
                <Button $spacing={0.4}>Stop</Button>
                <Button $spacing={0.4}>Pause</Button>
                <Button $spacing={0.4}>Perturb</Button>
              </ButtonRow>
            </Controls>
          </Projection>
        </LeftPanel>

        <Center>
          <Toolbar>
            <ToolButton><MdPhotoSizeSelectSmall size={48} /></ToolButton>
            <ToolButton><MdExposure size={48} /></ToolButton>
            <ToolButton $on><MdBrightness2 size={48} /></ToolButton>
            <ToolButton><MdFontDownload size={48} /></ToolButton>
            <Stats>
              <Stat>Points: 1000</Stat>
              <Stat>Dimension: 50</Stat>
              <Stat>Selected 11 points</Stat>
            </Stats>
          </Toolbar>
          <Projector />
          <HomeButton><MdHome size={43} /></HomeButton>
          <Card>
            <CardHead>
              память
              <MdExpandLess size={48} />
            </CardHead>
            <CardRow><b>label</b>память</CardRow>
          </Card>
        </Center>

        <RightPanel>
          <Actions>
            <Action disabled>Show All Data</Action>
            <Action>Isolate 11 points</Action>
            <Action>Clear selection</Action>
          </Actions>
          <SearchRow>
            <Field>
              <FieldLabel>Search</FieldLabel>
              <SearchValue $size={28}>память<RegexButton>.*</RegexButton></SearchValue>
            </Field>
            <Field $width={139}>
              <FieldLabel>by</FieldLabel>
              <SearchValue $size={32} $pad={14}>label<Caret /></SearchValue>
            </Field>
          </SearchRow>
          <Neighbors>
            <Caption $width={132}>neighbors</Caption>
            <Help $after={29}><MdHelp size={30} /></Help>
            <Slider width={219} value={0} />
            <NumberBox>
              10
              <Spinner>
                <svg width="15" height="19" viewBox="0 0 15 19" fill="none" stroke="#333" strokeWidth="1.8">
                  <path d="M4 5L7.5 1.5L11 5M4 13.5L7.5 17L11 13.5" />
                </svg>
              </Spinner>
            </NumberBox>
          </Neighbors>
          <DistanceRow>
            <Caption $width={241}>distance</Caption>
            <Metric $active>COSINE</Metric>
            <Metric>EUCLIDEAN</Metric>
          </DistanceRow>
          <NearestTitle>Nearest points in the original space:</NearestTitle>
          {NEIGHBORS.map(([name, value, tint]) => (
            <Neighbor key={name}>
              <NeighborText $color={tint}>
                {name}
                <Distance>{value.toFixed(3)}</Distance>
              </NeighborText>
              <Bar>
                {[25, 50, 75].map((t) => (
                  <Tick key={t} style={{ left: `${t}%` }} />
                ))}
                <BarFill $color={tint} style={{ width: `${(1 - value) * 100}%` }} />
              </Bar>
            </Neighbor>
          ))}
        </RightPanel>
        <TopShade />
      </Body>
    </App>
  );
}
